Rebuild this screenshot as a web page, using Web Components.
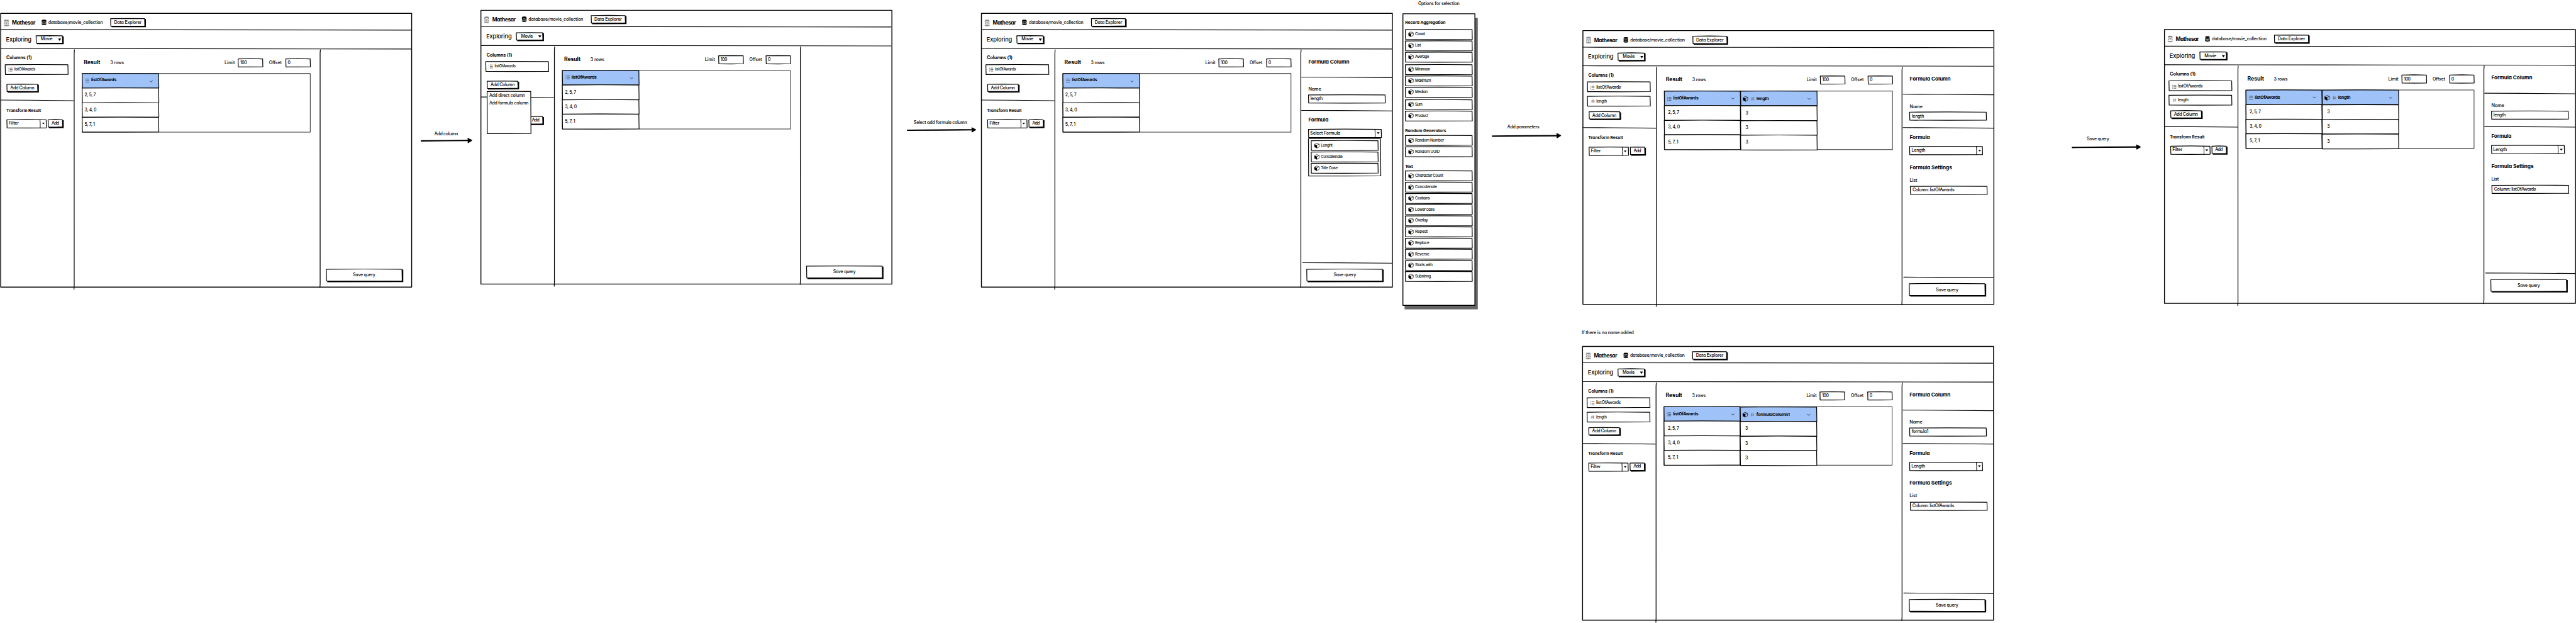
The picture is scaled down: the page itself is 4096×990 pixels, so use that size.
<!DOCTYPE html>
<html lang="en">
<head>
<meta charset="utf-8">
<title>Mathesar – formula column flow</title>
<style>
  html, body { margin: 0; padding: 0; background: #fff; overflow: hidden; }
  body { width: 4096px; height: 990px; }
</style>
</head>
<body>
<flow-board></flow-board>
<script>
const SCALE = 4096 / 7499;
const define = (name, cls) => customElements.define(name, cls);
const num = (el, name, fallback = 0) => el.hasAttribute(name) ? parseFloat(el.getAttribute(name)) : fallback;

/* Text label: s = size, w = the width that the label is tracked to, b = bold */
define('sk-text', class extends HTMLElement {
  connectedCallback() {
    if (this.shadowRoot) return;
    const s = num(this, 's', 12.8), w = num(this, 'w');
    const root = this.attachShadow({ mode: 'open' });
    root.innerHTML = `<style>
      :host { display: block; flex: none; height: 16px; line-height: 16px; white-space: pre;
        font-family: Inter, "Open Sans", sans-serif; font-feature-settings: "cv11", "calt" 0; font-size: ${s}px;
        font-weight: ${this.hasAttribute('b') ? 700 : 450}; color: #000; ${w ? `width: ${w}px;` : ''} }
      span { display: inline-block; }
    </style><span><slot></slot></span>`;
    if (w) {
      const span = root.querySelector('span');
      const natural = span.getBoundingClientRect().width / SCALE;
      const n = this.textContent.length;
      if (natural > 0 && n > 1) span.style.letterSpacing = ((w - natural) / (n - 1)).toFixed(3) + 'px';
    }
  }
});

/* Hand-drawn box: the outline runs on the edge of the element and takes no room */
define('sk-box', class extends HTMLElement {
  connectedCallback() {
    if (this.shadowRoot) return;
    const w = num(this, 'w'), h = num(this, 'h'), t = num(this, 't', 2.2);
    const fill = this.getAttribute('fill') || '#fff';
    const line = this.getAttribute('line') || '#000';
    const small = this.hasAttribute('flat') ? 0 : 0.6;
    const shade = this.hasAttribute('raised')
      ? `<path d="M2.4 3 L${w + 3.2} 1.6 L${w + 3.2} ${h + 3.2} L2.6 ${h + 3.4} Z" fill="#000"/>` : '';
    this.attachShadow({ mode: 'open' }).innerHTML = `<style>
      :host { display: flex; flex: none; align-items: center; position: relative; isolation: isolate;
        box-sizing: border-box; width: ${w}px; height: ${h}px; padding-left: ${num(this, 'p')}px; }
      :host([col]) { flex-direction: column; align-items: stretch; }
      :host([mid]) { justify-content: center; }
      svg { position: absolute; left: 0; top: 0; z-index: -1; overflow: visible; }
    </style>
    <svg width="${w}" height="${h}" viewBox="0 0 ${w} ${h}">${shade}
      <path d="M0 ${small / 2} L${w / 2} ${-small / 2} L${w - small} ${small / 2} L${w} ${h - small / 2} L${w / 2} ${h + small / 3} L${small} ${h} Z"
        fill="${fill}" stroke="${line}" stroke-width="${t}" stroke-linejoin="round"/>
    </svg><slot></slot>`;
  }
});

/* Ruled line, horizontal or (v) vertical, no room of its own */
define('sk-rule', class extends HTMLElement {
  connectedCallback() {
    if (this.shadowRoot) return;
    const n = num(this, 'n'), v = this.hasAttribute('v'), t = num(this, 't', 2), tilt = num(this, 'tilt', 0.6);
    const d = !v ? `M0 ${-tilt} L${n * 0.4} ${-tilt / 2} L${n} ${tilt}`
      : n < 100 ? `M-0.6 0 L0.2 ${n / 2} L0 ${n}` : `M0.6 2 L-0.1 12 L0 ${n - 12} L-0.6 ${n}`;
    this.attachShadow({ mode: 'open' }).innerHTML = `<style>
      :host { display: block; flex: none; position: relative; width: 0; height: 0; z-index: 1; }
      svg { display: block; overflow: visible; }
    </style><svg width="1" height="1"><path d="${d}" fill="none" stroke="#000" stroke-width="${t}" stroke-linecap="round"/></svg>`;
  }
});

const ICONS = {
  logo: [15.4, 19.4, `<g fill="#8c8c8c"><ellipse cx="7.7" cy="2.6" rx="6.8" ry="2.5"/>
    <path d="M0.4 4.6 L5 6 V8.6 L1.2 7.4 Z M15 4.6 L10.4 6 V8.6 L14.2 7.4 Z M0.6 9.2 L4.4 10.4 V13 L1.2 12 Z M14.8 9.2 L11 10.4 V13 L14.2 12 Z"/>
    <path d="M5.4 6.4 L7.7 8.4 L10 6.4 L10.6 8 L8.8 10 V12.2 L10.4 13.4 H5 L6.6 12.2 V10 L4.8 8 Z"/>
    <path d="M0.5 14 Q7.7 16.6 14.9 14 V17.4 Q13.6 19.2 7.7 19.3 Q1.8 19.2 0.5 17.4 Z"/></g>
    <path d="M1.5 15.4 L5 16.2 M14 15.4 L10.4 16.2" stroke="#fff" stroke-width="0.9"/>`],
  db: [14.3, 16.2, `<g fill="#000"><ellipse cx="7.1" cy="2.6" rx="6.7" ry="2.5"/>
    <path d="M0.3 4.4 Q7.1 7.8 14 4.4 V7 Q7.1 10.4 0.3 7 Z M0.3 8 Q7.1 11.4 14 8 V10.2 Q7.1 13.6 0.3 10.2 Z M0.3 11.2 Q7.1 14.6 14 11.2 V14 Q12.4 16 7.1 16.1 Q1.8 16 0.3 14 Z"/></g>`],
  list: [12, 10.8, `<path d="M3.2 1 H11.2 M3.2 5.4 H11.8 M3.2 9.8 H11.4" stroke="#000" stroke-width="1.1"/>
    <path d="M0 1 H1.3 M0 3.9 H1.1 M0 6.8 H1.1 M0 9.8 H1.3" stroke="#000" stroke-width="1.3"/>`],
  hash: [10.6, 11, `<path d="M3.5 0.4 L3 10.6 M7.8 0.4 L7.3 10.6 M0.4 3.6 H10.4 M0.2 7.4 H10.1" stroke="#666" stroke-width="1.1" fill="none"/>`],
  cube: [15, 15.4, `<path d="M7.5 0.8 L14.2 3.5 V11 L7.6 14.7 L0.9 11.5 V3.8 Z M7.6 6.4 L14.2 3.5" fill="none" stroke="#000" stroke-width="1.3" stroke-linejoin="round"/>
    <path d="M0.6 3.6 L7.9 6.3 V14.9 L0.7 11.6 Z" fill="#000"/>`],
  chevron: [9, 5.2, `<path d="M0.4 0.5 L4.5 4.7 L8.6 0.5" fill="none" stroke="#000" stroke-width="1.2"/>`],
  caret: [9, 7, `<path d="M0 0 H9 L4.5 7 Z" fill="#000"/>`],
  drop: [8.4, 4.8, `<path d="M0 0 H8.4 L4.2 4.8 Z" fill="#000"/>`]
};
define('sk-icon', class extends HTMLElement {
  connectedCallback() {
    if (this.shadowRoot) return;
    const [w, h, art] = ICONS[this.getAttribute('name')];
    this.attachShadow({ mode: 'open' }).innerHTML = `<style>:host { display: block; flex: none; width: ${w}px; height: ${h}px; } svg { display: block; overflow: visible; }</style>
      <svg width="${w}" height="${h}" viewBox="0 0 ${w} ${h}">${art}</svg>`;
  }
});

/* Select field with a divided arrow part */
define('sk-select', class extends HTMLElement {
  connectedCallback() {
    if (this.shadowRoot) return;
    const w = num(this, 'w');
    this.attachShadow({ mode: 'open' }).innerHTML = `<style>
      :host { display: block; flex: none; }
      .arrow { margin-left: auto; width: 17.8px; height: 24px; display: flex; align-items: center; }
      sk-rule { align-self: flex-start; }
      sk-icon { margin-left: 4.4px; }
      slot { display: block; margin-top: -1.4px; }
    </style><sk-box w="${w}" h="24" p="5.4"><slot></slot><div class="arrow"><sk-rule v n="24" t="1.8"></sk-rule><sk-icon name="drop"></sk-icon></div></sk-box>`;
  }
});

/* Formula entry with the cube icon */
define('formula-item', class extends HTMLElement {
  connectedCallback() {
    if (this.shadowRoot) return;
    this.attachShadow({ mode: 'open' }).innerHTML = `<style>
      :host { display: block; flex: none; }
      sk-icon { margin-right: 4.5px; }
      sk-text { margin-top: -1.4px; }
    </style><sk-box w="195" h="28.8" p="9"><sk-icon name="cube"></sk-icon><sk-text s="11.4" w="${this.getAttribute('w')}">${this.getAttribute('label')}</sk-text></sk-box>`;
  }
});

/* One column of the result table */
define('result-column', class extends HTMLElement {
  connectedCallback() {
    if (this.shadowRoot) return;
    const wide = this.hasAttribute('formula');
    const inset = this.hasAttribute('single') ? 7 : wide ? 14.6 : 11;
    const lift = this.hasAttribute('single');
    const vals = this.getAttribute('values').split('|').map(v => v.split('~'));
    const hs = [43.3, 41.8, 43.2];
    const cw = wide ? 223 : this.hasAttribute('single') ? 223.4 : 221.8;
    this.attachShadow({ mode: 'open' }).innerHTML = `<style>
      :host { display: flex; flex-direction: column; flex: none; margin-top: ${wide ? 0.8 : 0}px; }
      sk-box { align-items: center; }
      .title { margin-left: ${wide ? 6 : 5}px; margin-top: ${lift ? -4 : 1.5}px; }
      .cube { margin-right: 8.2px; margin-top: 3px; } .kind { margin-top: ${lift ? -1 : 2.4}px; }
      .menu { margin-left: auto; margin-right: ${wide ? 19 : 17.6}px; margin-top: ${lift ? 3.4 : 2.4}px; }
      .cell { margin-top: -1px; }
    </style>
    <sk-box w="${cw}" h="42.1" p="${wide ? 7 : 9.2}" fill="#9fc3f8">
      ${wide ? '<sk-icon class="cube" name="cube"></sk-icon>' : ''}
      <sk-icon class="kind" name="${wide ? 'hash' : 'list'}"></sk-icon>
      <sk-text class="title" b s="12.5" w="${this.getAttribute('lw')}">${this.getAttribute('label')}</sk-text>
      <sk-icon class="menu" name="chevron"></sk-icon>
    </sk-box>
    ${vals.map((v, i) => `<sk-box w="${cw}" h="${hs[i]}" p="${inset}"><sk-text class="cell" s="12.6" w="${v[1]}">${v[0]}</sk-text></sk-box>`).join('')}`;
  }
});

/* The explorer window. Attributes: two = second column, menu, picker, foot = room under the save button */
define('explorer-frame', class extends HTMLElement {
  connectedCallback() {
    if (this.shadowRoot) return;
    const has = n => this.hasAttribute(n);
    const two = has('two'), panel = has('picker') || two;
    const name = this.getAttribute('name') || 'length', nameW = num(this, 'name-w', 35.6);
    this.attachShadow({ mode: 'open' }).innerHTML = `<style>
      :host { display: block; }
      header { display: flex; align-items: center; height: 48.6px; box-sizing: border-box; padding: 4.7px 0 0 9.3px; flex: none; }
      .brand { margin: 2px 17.4px 0 8.3px; } .logo { margin-top: 2px; } .db { margin-right: 5.4px; } .path { margin-right: 23px; }
      .bar { display: flex; align-items: center; height: 54.4px; padding-left: 15.3px; flex: none; }
      .bar > sk-text { margin-right: 13.4px; }
      .bar sk-icon { margin-left: 16px; margin-top: 2px; }
      .body { display: flex; flex: 1; }
      .vr { margin-top: 1px; }
      .left { width: 214.3px; flex: none; display: flex; flex-direction: column; align-items: flex-start; position: relative; }
      .left > sk-text, .left > sk-box, .left > .row { margin-left: 16.3px; }
      .left > .field { margin-left: 13.4px; }
      .left > .add, .left > .row { margin-left: 18px; }
      .field sk-icon { margin-right: 4.8px; }
      .row { display: flex; gap: 5px; align-items: flex-start; }
      .gone { visibility: hidden; }
      .menu { position: absolute; left: 17.8px; top: 133.6px; z-index: 3; }
      .left > .menu { margin: 0; }
      .main { width: 715.7px; flex: none; box-sizing: border-box; padding: 29px 28.4px 0 23px; }
      .top { display: flex; align-items: center; height: 23.7px; padding-left: 4.7px; }
      .top .count { margin: 0 auto 0 28.7px; }
      .table { margin-top: 19.6px; } .table sk-box { align-items: flex-start; }
      .right { width: 266.5px; flex: none; box-sizing: border-box; display: flex; flex-direction: column; align-items: flex-start; padding-left: 22px; }
      .in { margin-top: -1.4px; }
      .drop { margin-top: 3.4px; } .drop formula-item { margin: 6px 0 -1.8px 7.8px; }
      .foot { margin-top: auto; padding-bottom: ${num(this, 'foot', 18)}px; }
      .foot sk-rule { margin-left: -17px; } .foot sk-box { margin-top: 17.8px; margin-left: ${two ? -1.3 : -4.4}px; }
    </style>
    <sk-box flat col w="1196.4" h="796.4" t="2.6">
      <header>
        <sk-icon class="logo" name="logo"></sk-icon><sk-text class="brand" b s="15.4" w="68.3">Mathesar</sk-text>
        <sk-icon class="db" name="db"></sk-icon><sk-text class="path" w="159">database/movie_collection</sk-text>
        <sk-box raised mid w="99.6" h="21.9"><sk-text w="80">Data Explorer</sk-text></sk-box>
      </header>
      <sk-rule n="1194" t="2.1"></sk-rule>
      <div class="bar"><sk-text s="17" w="74.3">Exploring</sk-text>
        <sk-box raised w="77.3" h="21.4" p="13.7"><sk-text w="34.6">Movie</sk-text><sk-icon name="caret"></sk-icon></sk-box></div>
      <sk-rule n="1194" t="2.1"></sk-rule>
      <div class="body">
        <div class="left">
          <sk-text b s="13" w="74.6" style="margin-top:18px">Columns (1)</sk-text>
          <sk-box class="field" w="183.3" h="28.7" p="9.6" style="margin-top:12px"><sk-icon name="list" style="margin-top:${two ? 5 : 0}px"></sk-icon><sk-text s="${two ? 12.6 : 11.1}" w="${two ? 72 : 61.3}" style="margin-top:${two ? 2 : -1.4}px">listOfAwards</sk-text></sk-box>
          ${two ? '<sk-box class="field" w="183.3" h="28.7" p="10.8" style="margin-top:13.4px"><sk-icon name="hash"></sk-icon><sk-text s="11.1" w="30.8" style="margin-top:-1px">length</sk-text></sk-box>' : ''}
          <sk-box class="add" raised mid w="90" h="21" style="margin-top:${two ? 16.3 : 28.7}px"><sk-text w="70.3">Add Column</sk-text></sk-box>
          <sk-rule n="212" tilt="0.8" style="margin-top:26px"></sk-rule>
          <sk-text b s="12" w="101" class="${has('menu') ? 'gone' : ''}" style="margin-top:20.7px">Transform Result</sk-text>
          <div class="row" style="margin-top:19px"><sk-select w="115" class="${has('menu') ? 'gone' : ''}"><sk-text w="29.4">Filter</sk-text></sk-select><sk-box raised mid w="42.3" h="21.6"><sk-text w="22.3">Add</sk-text></sk-box></div>
          ${has('menu') ? '<sk-box class="menu" col w="127.7" h="122.7" p="6.2"><sk-text w="104.5" s="12.6" style="margin-top:3.6px">Add direct column</sk-text><sk-text s="12.6" w="114.5" style="margin-top:5px">Add formula column</sk-text></sk-box>' : ''}
        </div>
        <sk-rule v class="vr" n="698.6" t="2.3"></sk-rule>
        <div class="main">
          <div class="top">
            <sk-text b s="15.8" w="48" style="margin-top:-3px">Result</sk-text><sk-text class="count" w="40.4">3 rows</sk-text>
            <sk-text w="29.6" style="margin-right:10px">Limit</sk-text><sk-box w="72.2" h="23.7" p="6"><sk-text s="12.6" w="19.4">100</sk-text></sk-box>
            <sk-text w="37" style="margin:0 12px 0 17.4px">Offset</sk-text><sk-box w="71.6" h="23.7" p="5.4"><sk-text s="12.6" w="7.6">0</sk-text></sk-box>
          </div>
          <div class="table"><sk-box flat w="664.2" h="170.3" t="1.9" line="#333">
            <result-column ${two ? '' : 'single'} label="listOfAwards" lw="73.6" values="2, 5, 7~32.7|3, 4, 0~34.7|5, 7, 1~30"></result-column>
            ${two ? `<result-column formula label="${this.getAttribute('head')}" lw="${this.getAttribute('head-w')}" values="3~7|3~7|3~7"></result-column>` : ''}
          </sk-box></div>
        </div>
        <sk-rule v class="vr" n="693.6" t="2.3"></sk-rule>
        <div class="right">
          ${panel ? `
          <sk-text b s="15" w="119.2" style="margin-top:29px">Formula Column</sk-text>
          <sk-rule n="263" tilt="0.8" style="margin:38px 0 0 -19.4px"></sk-rule>
          <sk-text s="13.4" w="37.3" style="margin-top:25.6px">Name</sk-text>
          <sk-box w="223.8" h="23.7" p="6" style="margin-top:9.4px"><sk-text class="in" w="${nameW}">${name}</sk-text></sk-box>
          <sk-rule n="263" tilt="0.8" style="margin:22.3px 0 0 -19.4px"></sk-rule>
          <sk-text b s="15" w="58.8" style="margin-top:19px">Formula</sk-text>
          <sk-select w="212.5" style="margin-top:19px">${two ? '<sk-text w="40.2">Length</sk-text>' : '<sk-text w="88">Select Formula</sk-text>'}</sk-select>` : ''}
          ${has('picker') ? `<sk-box class="drop" col w="210.6" h="109"><formula-item label="Lenght" w="34.4"></formula-item><formula-item label="Concatenate" w="63.7"></formula-item><formula-item label="Title Case" w="49.4"></formula-item></sk-box>` : ''}
          ${two ? `<sk-text b s="15" w="123" style="margin-top:28.4px">Formula Settings</sk-text>
          <sk-text s="13.4" w="21.6" style="margin-top:21px">List</sk-text>
          <sk-box w="224" h="23.7" p="6.4" style="margin:10.6px 0 0 1.6px"><sk-text class="in" w="122.4">Column: listOfAwards</sk-text></sk-box>` : ''}
          <div class="foot">${panel ? '<sk-rule n="260" tilt="0.7"></sk-rule>' : ''}<sk-box raised mid w="220.8" h="34.5"><sk-text w="65.5">Save query</sk-text></sk-box></div>
        </div>
      </div>
    </sk-box>`;
  }
});

/* List of every formula */
define('options-panel', class extends HTMLElement {
  connectedCallback() {
    if (this.shadowRoot) return;
    const group = (title, w, top, gap, items) => `<sk-text b s="12.4" w="${w}" style="margin:${top}px 0 ${gap}px 6.6px">${title}</sk-text>` +
      items.map(([l, iw, m]) => `<formula-item label="${l}" w="${iw}" style="margin-bottom:${m || 4.2}px"></formula-item>`).join('');
    this.attachShadow({ mode: 'open' }).innerHTML = `<style>
      :host { display: block; }
      .shade { background: #666; width: 213px; height: 848px; position: absolute; left: 5px; top: 12.6px; }
      formula-item { margin-left: 7px; }
    </style><div class="shade"></div><sk-box flat col w="209.6" h="848.4" t="2.6">
      ${group('Record Aggregation', 117.4, 18, 12, [['Count', 29.3], ['List', 17], ['Average', 40.7, 7.2], ['Minimum', 44.3], ['Maximum', 46.7], ['Median', 36.4, 7.4], ['Sum', 21.4], ['Product', 38.4, 0.1]])}
      ${group('Random Generators', 119.6, 21.3, 5.3, [['Random Number', 84.2], ['Random UUID', 71.6, 0.1]])}
      ${group('Text', 22.6, 19.5, 5.7, [['Character Count', 82], ['Concatenate', 63.7, 3.7], ['Contains', 43.7, 3.7], ['Lower case', 56.7, 3.7], ['Overlay', 37.7, 3.7], ['Repeat', 36.7, 3.7], ['Replace', 41.3, 3.7], ['Reverse', 41.3, 3.7], ['Starts with', 51, 3.7], ['Substring', 46.3]])}
    </sk-box>`;
  }
});

/* Arrow between two steps, label above */
define('flow-arrow', class extends HTMLElement {
  connectedCallback() {
    if (this.shadowRoot) return;
    const n = num(this, 'n'), gap = num(this, 'gap');
    this.attachShadow({ mode: 'open' }).innerHTML = `<style>
      :host { display: block; width: ${n}px; }
      sk-text { margin-left: ${num(this, 'dx')}px; margin-bottom: ${gap - 8}px; }
      svg { display: block; overflow: visible; }
    </style><sk-text s="12.8" w="${num(this, 'lw')}">${this.getAttribute('label')}</sk-text>
    <svg width="${n}" height="1"><path d="M1.8 1 L${n * 0.5} 0.2 L${n - 8} -0.4" fill="none" stroke="#000" stroke-width="4" stroke-linecap="round"/>
      <path d="M${n - 11.6} -6 L${n - 1} -0.6 L${n - 11.2} 5.6 L${n - 10.4} -0.4 Z" fill="#000" stroke="#000" stroke-width="3" stroke-linejoin="round"/></svg>`;
  }
});

/* Free canvas that holds the steps of the flow */
define('flow-board', class extends HTMLElement {
  connectedCallback() {
    const at = (x, y) => `style="left:${x}px;top:${y}px"`;
    const root = this.attachShadow({ mode: 'open' });
    root.innerHTML = `<style>
      :host { display: block; position: relative; width: 4096px; height: 990px; overflow: hidden; contain: strict; background: #fff; }
      .canvas { position: absolute; left: 0; top: 0; width: 7499px; height: 1812px; overflow: hidden;
        transform: scale(${SCALE}); transform-origin: 0 0; }
      .canvas > * { position: absolute; }
    </style><div class="canvas">
    <explorer-frame ${at(2, 38.7)}></explorer-frame>
    <flow-arrow n="149" gap="20" dx="39.6" lw="68.8" label="Add column" ${at(1225, 381.3)}></flow-arrow>
    <explorer-frame menu ${at(1400.2, 29.7)}></explorer-frame>
    <flow-arrow n="201" gap="22.6" dx="20.4" lw="155.5" label="Select add formula column" ${at(2639.5, 347.8)}></flow-arrow>
    <explorer-frame picker ${at(2856.8, 38.7)}></explorer-frame>
    <sk-text s="12.8" w="120.7" ${at(4128.3, 1.8)}>Options for selection</sk-text>
    <options-panel ${at(4084, 39.6)}></options-panel>
    <flow-arrow n="201" gap="25.2" dx="45" lw="93.4" label="Add parameters" ${at(4343.2, 361.6)}></flow-arrow>
    <explorer-frame two head="length" head-w="36.3" foot="26" ${at(4607.5, 89.4)}></explorer-frame>
    <flow-arrow n="200.4" gap="24.6" dx="44" lw="65.3" label="Save query" ${at(6031, 395.9)}></flow-arrow>
    <explorer-frame two head="length" head-w="36.3" foot="35.7" ${at(6300.6, 86.4)}></explorer-frame>
    <sk-text s="12.8" w="151" ${at(4605, 960.4)}>If there is no name added</sk-text>
    <explorer-frame two head="formulaColumn1" head-w="97.4" name="formula1" name-w="49" foot="26" ${at(4607, 1007.8)}></explorer-frame>
    </div>`;
  }
});
</script>
</body>
</html>
